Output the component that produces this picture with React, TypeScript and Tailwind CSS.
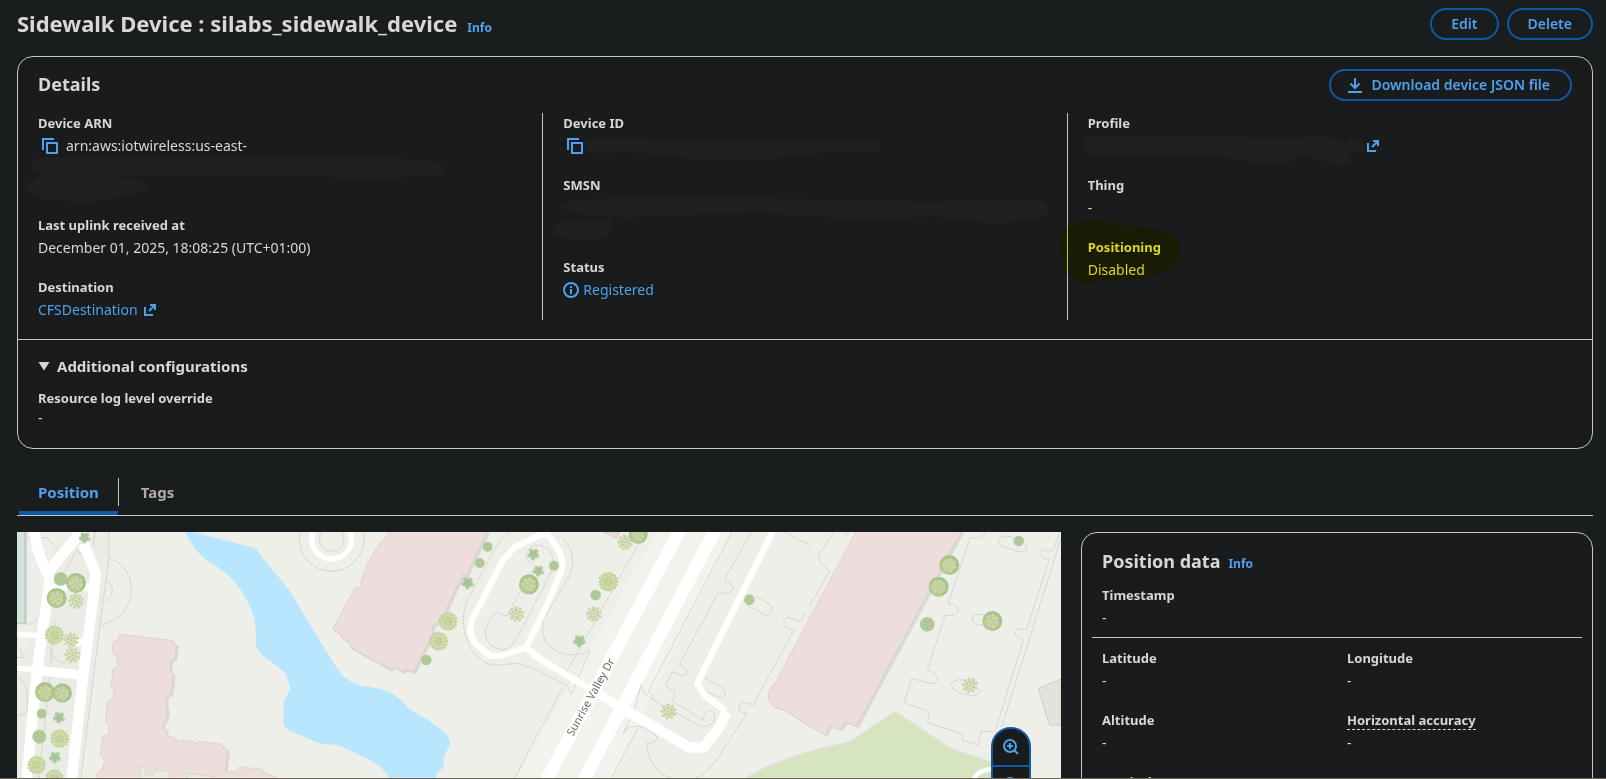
import type { ReactNode } from "react";

type TreeKind = "round" | "leafy" | "small" | "star" | "sparse";
type TreeSpec = [x: number, y: number, r: number, kind: TreeKind];

const trees: TreeSpec[] = [
  [254, 38, 18, "star"], [182, 162, 21, "small"], [228, 174, 30, "round"], [170, 219, 30, "round"],
  [228, 228, 25, "sparse"], [163, 330, 29, "leafy"], [213, 345, 24, "sparse"], [217, 390, 25, "sparse"],
  [135, 501, 30, "round"], [187, 504, 29, "round"], [125, 566, 15, "small"], [177, 578, 19, "star"],
  [118, 635, 21, "small"], [179, 641, 28, "leafy"], [165, 697, 19, "star"], [110, 720, 28, "leafy"],
  [163, 760, 28, "leafy"],
  [1463, 65, 15, "small"], [1439, 114, 15, "small"], [1403, 174, 20, "star"], [1344, 289, 29, "leafy"],
  [1316, 349, 29, "leafy"], [1279, 405, 16, "small"], [1600, 88, 19, "star"], [1615, 138, 18, "star"],
  [1587, 178, 30, "round"], [1550, 267, 25, "sparse"],
  [1662, 122, 15, "small"], [1876, 52, 25, "sparse"], [1915, 28, 28, "round"], [1825, 170, 30, "leafy"],
  [1787, 210, 16, "small"], [1782, 267, 25, "sparse"], [1738, 348, 20, "star"], [2248, 224, 16, "small"],
  [2006, 560, 25, "sparse"],
  [2848, 120, 30, "round"], [2816, 185, 30, "round"], [2782, 298, 22, "small"], [2977, 288, 30, "round"],
  [2910, 481, 25, "sparse"], [3056, 48, 16, "small"],
];

function Tree({ spec }: { spec: TreeSpec }) {
  const [x, y, r, kind] = spec;
  const ring = (count: number, dist: number, size: number, fill: string) =>
    Array.from({ length: count }, (_, i) => {
      const a = (i / count) * Math.PI * 2 + 0.4;
      return <circle key={`${fill}${dist}${i}`} cx={Math.cos(a) * r * dist} cy={Math.sin(a) * r * dist} r={r * size} fill={fill} />;
    });
  return (
    <g transform={`translate(${x} ${y})`}>
      {kind === "round" && (
        <>
          <circle r={r} fill="#a9c28d" />
          <circle cx={-r * 0.12} cy={r * 0.12} r={r * 0.8} fill="#b6ca92" />
          {ring(7, 0.52, 0.19, "#c9d7a2")}
          {ring(4, 0.22, 0.13, "#d6d3b4")}
        </>
      )}
      {kind === "leafy" && (
        <>
          <circle r={r * 0.9} fill="#c8d6a1" />
          {ring(16, 0.9, 0.11, "#c3d299")}
          {ring(10, 0.62, 0.1, "#d9e1bc")}
          {ring(6, 0.3, 0.11, "#bccd93")}
        </>
      )}
      {kind === "small" && (
        <>
          <circle r={r} fill="#b2ca9c" />
          {ring(5, 0.5, 0.18, "#aac490")}
        </>
      )}
      {kind === "star" && (
        <>
          {ring(5, 0.62, 0.36, "#b2cda4")}
          <circle r={r * 0.55} fill="#a5c497" />
        </>
      )}
      {kind === "sparse" && (
        <>
          <circle r={r * 0.75} fill="#e0e4cd" />
          {ring(9, 0.78, 0.2, "#cbd6ab")}
          {ring(6, 0.42, 0.17, "#c3cf9e")}
          <circle r={r * 0.12} fill="#b3bf8c" />
        </>
      )}
    </g>
  );
}

const buildingA =
  "M358 328 517 346 520 356 530 360 524 405 513 408 510 440 520 447 513 510 500 513 498 540 503 560 497 590 488 595 490 608 497 612 500 632 525 640 530 652 545 645 583 650 588 658 600 649 665 658 670 670 683 674 676 738 710 742 718 725 785 733 795 745 830 756 830 960 270 960 293 742 305 735 314 708 301 690 308 635 325 628 327 600 316 592 322 530 335 525 345 500 332 490 340 430 354 422 350 395 337 385 340 350 353 345Z";
const buildingB =
  "M1167 15 1165 28C1130 65 1090 120 1080 188L1065 190 998 312 1020 325 1023 337 1050 350 1050 366 1170 432 1180 425 1210 440 1216 432 1242 440 1300 320 1297 305 1330 270 1387 150 1400 150 1464 15Z";
const buildingC =
  "M2570 15 2325 475C2298 496 2300 530 2325 548L2350 553 2430 605 2475 630 2490 603 2520 615 2535 590 2568 605 2886 15Z";

function SiteMap() {
  return (
    <svg viewBox="51 21 3132 1200" className="block w-full" role="img" aria-label="Map of the area around Sunrise Valley Dr">
      <rect x="51" y="21" width="3132" height="1200" fill="#eeefe9" />
      <path d="M165 60 270 40 327 21V100L243 758 200 1220H51V460L100 300Z" fill="#ebece6" />
      <path d="M1970 21H2195L1835 758 1610 1220H1330L1550 758Z" fill="#f2f3ed" />

      <path d="M72 21H80V298H51V292H72Z" fill="#c9cdc8" />
      <rect x="51" y="21" width="21" height="271" fill="#d0e5dc" />

      <g fill="none" stroke="#c9cac5" strokeWidth="2">
        <path d="M327 21V100L300 300 243 758M285 21 280 60M328 98Q394 125 394 192 392 275 305 300M318 165Q338 175 337 200 332 225 314 232" />
        <path d="M80 38H140L170 70M230 75 195 140M232 75Q235 90 250 88M165 290 118 758M240 460 205 758M51 455Q85 470 82 520V560L51 575M52 365Q70 380 70 398H51M150 365Q150 410 200 415M80 298Q100 298 110 285" />
        <circle cx="995" cy="42" r="97" />
        <circle cx="995" cy="42" r="37" />
        <path d="M1530 21Q1500 40 1480 80L1400 230Q1385 270 1392 310C1400 370 1440 420 1490 421L1550 415Q1590 425 1620 440L1700 480 1715 507 1770 375Q1740 395 1700 388 1615 370 1630 285L1710 150Q1735 90 1690 40" />
        <path d="M1605 60Q1580 70 1577 95 1580 110 1600 120M1600 130 1520 273 1490 262Q1455 290 1456 330 1465 370 1505 374 1530 372 1545 350L1660 130Q1665 60 1605 60" />
        <path d="M1925 40 1700 440M1690 485 1600 650 1545 758" />
        <path d="M2255 21 2173 165Q2200 178 2200 190 2190 210 2170 205L2158 198 2038 418Q2062 430 2062 440 2058 458 2040 450L2018 440 1997 482 2025 500 2018 530 2110 585Q2112 560 2130 556 2148 560 2144 585 2130 610 2100 603L1970 530Q1925 510 1923 478L1905 550 1870 625Q1880 600 1925 605 1970 625 1972 640 1965 655 1940 655 1940 710 1990 750 2070 790 2130 730L2160 690 2240 565 2218 558Q2215 535 2225 530L2260 540 2380 318 2352 305Q2348 280 2365 277L2400 290 2420 260" />
        <path d="M2195 21 1945 500 1960 510 1955 525M1912 610 1835 758M2355 21Q2390 45 2430 58M2240 240 2300 272Q2322 260 2312 240L2265 212M2115 460 2172 492Q2185 510 2165 518L2110 498" />
        <path d="M2502 21 2455 90Q2450 110 2490 138L2430 240M2530 21 2540 32 2548 21" />
        <path d="M2955 21Q2950 45 2910 38L2845 235Q2880 240 2874 262 2865 275 2835 270L2782 435Q2820 450 2813 465 2805 480 2790 475L2735 460 2712 533 2788 560 2783 592 2887 628 2888 645 2933 660 2945 618 2985 620 3070 345Q3045 335 3045 322 3050 305 3080 315L3147 105Q3115 95 3120 83 3130 70 3158 78L3178 25M3183 40 3005 605" />
        <path d="M2998 42Q3010 30 3030 35L3070 50Q3085 60 3078 75 3070 84 3050 78L3010 65Q2992 55 2998 42M2950 270Q2915 262 2917 285 2918 300 2950 300M2895 465Q2855 460 2854 480 2860 505 2915 512 2945 510 2938 490" />
      </g>

      <path d="M2200 778 2240 758Q2310 715 2430 680L2550 650 2685 560 2850 670 2970 710 3060 740V1220H1950Z" fill="#d6e4bf" stroke="#dde3d2" strokeWidth="5" />
      <path d="M3115 490 3183 462V600H3148Z" fill="#e3e3dc" stroke="#cdcec8" strokeWidth="3" />
      <path d="M2916 770Q2935 730 2985 732" fill="none" stroke="#fff" strokeWidth="13" />

      <path
        d="M553 15C580 70 600 95 640 118 690 150 720 185 740 225 765 270 768 300 768 360 775 385 800 400 810 407 835 430 855 435 860 455L872 490 850 535V590Q850 608 870 618L950 652Q975 660 1015 660L1095 698Q1145 720 1168 758L1200 900H1300L1310 742 1328 730 1334 690 1350 660Q1352 640 1330 618 1280 580 1225 550 1205 525 1180 508 1150 488 1085 484 1040 468 1022 445 1000 415 940 315 900 250 880 215 855 175 815 132 790 105 768 70 765 15Z"
        fill="#b8e6fe"
      />

      <g fill="none" stroke="#fff" strokeLinejoin="round">
        <path d="M103 15Q110 90 150 160L112 430 80 760 50 1220M246 15 150 135" strokeWidth="32" />
        <path d="M250 55 287 145 282 200 249 455 215 760 180 1220" strokeWidth="32" />
        <path d="M150 186H280M200 352H262" strokeWidth="22" />
        <path d="M51 328 125 332" strokeWidth="16" />
        <path d="M51 430 120 434" strokeWidth="16" />
        <path d="M110 436 245 450" strokeWidth="28" />
        <circle cx="995" cy="42" r="60" strokeWidth="16" />
        <path d="M1620 30 1545 65 1510 105 1415 285 1410 320 1425 355 1470 392 1500 393 1578 368 1630 262 1680 150 1688 115 1680 80 1645 30Z" strokeWidth="18" />
        <path d="M1578 368 1620 402 1850 540" strokeWidth="20" />
        <path d="M1780 498 1860 545" strokeWidth="26" />
        <path d="M1850 540 2070 668H2110L2160 605 2178 562" strokeWidth="31" />
        <path d="M2178 558 2115 512 2092 475 2320 15" strokeWidth="19" />
        <path d="M2040 15 1643 758 1400 1220" strokeWidth="38" />
        <path d="M2146 15 1755 758 1510 1220" strokeWidth="38" />
      </g>

      <g fill="#dadbd6">
        <path d={buildingA} transform="translate(7 4)" />
        <path d={buildingB} transform="translate(6 8)" />
        <path d={buildingC} transform="translate(8 5)" />
      </g>
      <g fill="#eedddd" stroke="#d6cac9" strokeWidth="2">
        <path d={buildingA} />
        <path d={buildingB} />
        <path d={buildingC} />
      </g>
      <path d="M420 727H432L435 748 460 750 466 733 508 740V800H420ZM562 745 640 755V800H562Z" fill="#e9eae4" stroke="#cfcfca" strokeWidth="2" />
      <path d="M1810 21 1850 40 1858 21Z" fill="#eedddd" stroke="#d6cac9" strokeWidth="3" />

      {trees.map((t) => (
        <Tree key={`${t[0]}-${t[1]}`} spec={t} />
      ))}

      <text
        transform="translate(1770 515) rotate(-61)"
        textAnchor="middle"
        dominantBaseline="central"
        fontSize="33"
        fill="#6a6a6a"
        stroke="#fff"
        strokeWidth="5"
        paintOrder="stroke"
        fontFamily="Noto Sans, sans-serif"
      >
        Sunrise Valley Dr
      </text>
    </svg>
  );
}

function CopyIcon() {
  return (
    <svg viewBox="0 0 16 16" className="size-4" fill="none" stroke="currentColor" strokeWidth="2" aria-hidden="true">
      <path d="M1 12V1H12" />
      <path d="M5 5H15V15H5Z" />
    </svg>
  );
}

function ExternalIcon() {
  return (
    <svg viewBox="0 0 16 16" className="size-4 shrink-0" fill="none" stroke="currentColor" strokeWidth="2" aria-hidden="true">
      <path d="M3 5V13H11" />
      <path d="M7 9 13 3M8 3H13V8" />
    </svg>
  );
}

function Smear({ d }: { d: string }) {
  return (
    <svg className="block h-5 w-full overflow-visible" aria-hidden="true">
      <path d={d} fill="#1f1f1f" />
    </svg>
  );
}

function Field({ label, children = "-" }: { label: ReactNode; children?: ReactNode }) {
  return (
    <div>
      <dt className="text-[13px] leading-5 font-bold">{label}</dt>
      <dd className="mt-[3px] text-sm leading-5">{children}</dd>
    </div>
  );
}

function Info() {
  return (
    <a href="#info" className="text-xs font-bold text-[#4fa1ec]">
      Info
    </a>
  );
}

const buttonStyle =
  "flex h-8 items-center gap-2 rounded-full border-2 border-[#1159a5] text-sm font-semibold text-[#4fa1ec] hover:bg-[#132536]";

export default function App() {
  return (
    <div className="flex h-screen flex-col overflow-hidden border-b border-[#6f665b] bg-[#191d1e] pr-[13px] pl-[17px] font-['Noto_Sans',sans-serif] text-[#dad7d3]">
      <header className="flex h-14 shrink-0 items-start justify-between pt-2">
        <div className="flex items-baseline gap-2.5">
          <h1 className="text-[22px] leading-[30px] font-bold">Sidewalk Device : silabs_sidewalk_device</h1>
          <Info />
        </div>
        <div className="flex gap-2">
          <button type="button" className={`${buttonStyle} px-[19px]`}>Edit</button>
          <button type="button" className={`${buttonStyle} px-[19px]`}>Delete</button>
        </div>
      </header>

      <section className="shrink-0 rounded-2xl border border-[#c6c6c8] bg-[#191b1d]">
        <div className="flex items-start justify-between px-5 pt-3">
          <h2 className="text-lg leading-[30px] font-bold">Details</h2>
          <button type="button" className={`${buttonStyle} pr-5 pl-4`}>
            <svg viewBox="0 0 16 16" className="size-4" fill="none" stroke="currentColor" strokeWidth="2" aria-hidden="true">
              <path d="M8 1V11M3.500 6.500 8 11 12.500 6.500M1 15H15" />
            </svg>
            Download device JSON file
          </button>
        </div>

        <div className="mt-3 mb-[19px] ml-px grid grid-cols-3 divide-x divide-[#c6c6c8]">
          <dl className="flex flex-col gap-[19px] pr-5 pl-[19px]">
            <Field label="Device ARN">
              <div className="flex items-center gap-2 pl-1">
                <button type="button" aria-label="Copy device ARN" className="text-[#4fa1ec]"><CopyIcon /></button>
                arn:aws:iotwireless:us-east-
              </div>
              <Smear d="M-7 8Q-6 1 4 1L150 -1 270 2Q330 -3 380 4L402 7Q411 12 402 19L375 20Q320 28 275 19H0Q-7 14 -7 8Z" />
              <Smear d="M-13 12Q-10 2 5 0L80 1Q112 4 112 11 110 17 90 19 60 28 35 26 -13 23 -13 12Z" />
            </Field>
            <Field label="Last uplink received at">December 01, 2025, 18:08:25 (UTC+01:00)</Field>
            <Field label="Destination">
              <a href="#destination" className="flex items-center gap-1 text-[#4fa1ec]">
                CFSDestination
                <ExternalIcon />
              </a>
            </Field>
          </dl>

          <dl className="flex flex-col gap-[19px] px-5">
            <Field label="Device ID">
              <div className="flex items-center gap-0.5 pl-1">
                <button type="button" aria-label="Copy device ID" className="text-[#4fa1ec]"><CopyIcon /></button>
                <Smear d="M0 12Q0 3 10 2L150 4 290 4Q297 6 296 12L290 17Q240 15 200 21 150 28 110 23 70 17 40 17L5 18Z" />
              </div>
            </Field>
            <Field label="SMSN">
              <Smear d="M-2 9Q0 1 20 1L110 -2 260 1 370 4Q450 -1 480 3 489 7 486 14 475 24 430 25L370 19 300 22 200 15Q120 16 70 20 10 20 -2 9Z" />
              <Smear d="M-5 4 40 2Q52 2 49 13 45 22 25 22L-3 20Q-12 18 -8 8Z" />
            </Field>
            <Field label="Status">
              <span className="flex items-center gap-1 text-[#4fa1ec]">
                <svg viewBox="0 0 16 16" className="size-4" fill="none" stroke="currentColor" strokeWidth="2" aria-hidden="true">
                  <circle cx="8" cy="8" r="7" />
                  <path d="M8 7V12M8 4V6" />
                </svg>
                Registered
              </span>
            </Field>
          </dl>

          <dl className="flex flex-col gap-[19px] px-5">
            <Field label="Profile">
              <a href="#profile" aria-label="Open profile" className="flex items-center text-[#4fa1ec]">
                <span className="block w-[277px]">
                  <Smear d="M-6 10Q-6 -2 10 -1L90 1 200 2 240 1 258 7 268 2Q280 6 276 16L260 18 263 26Q258 33 245 28L212 18 205 26Q195 32 165 27 130 18 100 20H20Q-4 22 -6 10Z" />
                </span>
                <ExternalIcon />
              </a>
            </Field>
            <Field label="Thing" />
            <div className="relative">
              <Field label="Positioning">Disabled</Field>
              <svg className="pointer-events-none absolute inset-0 size-full overflow-visible mix-blend-multiply" aria-hidden="true">
                <path d="M-27 10Q-27 -8 -18 -13 12 -21 37 -11L62 -9Q80 -6 87 -1L91 5V21Q88 33 75 35 60 43 35 43L12 43 2 48Q-6 49 -10 45L-20 37Q-26 30 -27 10Z" fill="#ffff20" />
              </svg>
            </div>
          </dl>
        </div>

        <div className="border-t border-[#c6c6c8] px-5 pt-3.5 pb-5">
          <button type="button" aria-expanded="true" className="mb-2.5 flex items-center gap-[7px] text-[15px] leading-6 font-bold">
            <svg viewBox="0 0 12 10" className="h-2.5 w-3" fill="currentColor" aria-hidden="true">
              <path d="M0.500 1H11.500L6 9.500Z" />
            </svg>
            Additional configurations
          </button>
          <dl>
            <dt className="text-[13px] leading-5 font-bold">Resource log level override</dt>
            <dd className="text-sm leading-5">-</dd>
          </dl>
        </div>
      </section>

      <div role="tablist" className="mt-5 flex h-[47px] shrink-0 items-stretch border-b border-[#c6c6c8] text-[15px] font-bold">
        <button
          type="button"
          role="tab"
          aria-selected="true"
          className="ml-0.5 flex items-center rounded-b-xs border-b-4 border-[#1159a5] px-[19px] pt-1 text-[#4fa1ec]"
        >
          Position
        </button>
        <span className="my-[9px] w-px bg-[#c6c6c8]" />
        <button type="button" role="tab" aria-selected="false" className="px-[22px] text-[#b3aca6]">
          Tags
        </button>
      </div>

      <main className="mt-4 grid min-h-0 flex-1 grid-cols-12 gap-5 overflow-hidden">
        <div className="relative col-span-8">
          <SiteMap />
          <div className="absolute top-[195px] right-[30px] flex w-10 flex-col divide-y-2 divide-[#1159a5] rounded-full border-2 border-[#1159a5] bg-[#191b1d] text-[#4fa1ec]">
            <button type="button" aria-label="Zoom in" className="flex h-[38px] items-center justify-center">
              <svg viewBox="0 0 16 16" className="size-4" fill="none" stroke="currentColor" strokeWidth="2" aria-hidden="true">
                <circle cx="7" cy="7" r="6" />
                <path d="M7 4V10M4 7H10M11.300 11.300 15 15" />
              </svg>
            </button>
            <button type="button" aria-label="Zoom out" className="flex h-9 items-center justify-center">
              <svg viewBox="0 0 16 16" className="size-4" fill="none" stroke="currentColor" strokeWidth="2" aria-hidden="true">
                <circle cx="7" cy="7" r="6" />
                <path d="M4 7H10M11.300 11.300 15 15" />
              </svg>
            </button>
          </div>
        </div>

        <aside className="col-span-4 rounded-2xl border border-[#c6c6c8] bg-[#191b1d] pt-4">
          <div className="mb-3 flex items-baseline gap-2 px-5">
            <h2 className="text-lg leading-6 font-bold">Position data</h2>
            <Info />
          </div>
          <dl className="px-5">
            <Field label="Timestamp" />
          </dl>
          <hr className="mx-2.5 mt-[9px] mb-2.5 border-[#c6c6c8]" />
          <dl className="grid grid-cols-2 gap-x-5 gap-y-[19px] px-5">
            <Field label="Latitude" />
            <Field label="Longitude" />
            <Field label="Altitude" />
            <Field label={<span className="border-b border-dashed border-[#dad7d3]">Horizontal accuracy</span>} />
            <Field label="Vertical accuracy" />
          </dl>
        </aside>
      </main>
    </div>
  );
}
